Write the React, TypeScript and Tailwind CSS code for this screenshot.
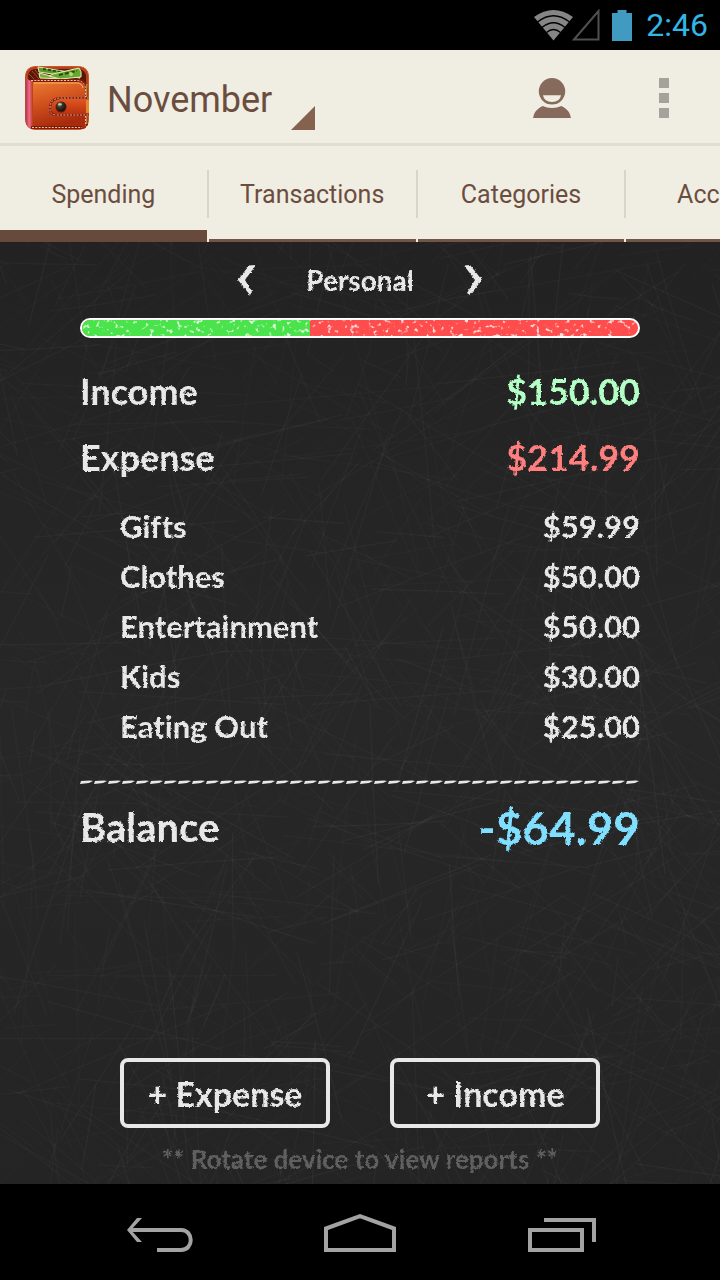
import { useState } from "react";

type Category = {
  name: string;
  amount: string;
};

const months = ["October", "November", "December"];
const tabs = ["Spending", "Transactions", "Categories", "Accounts"];

const categories: Category[] = [
  { name: "Gifts", amount: "$59.99" },
  { name: "Clothes", amount: "$50.00" },
  { name: "Entertainment", amount: "$50.00" },
  { name: "Kids", amount: "$30.00" },
  { name: "Eating Out", amount: "$25.00" },
];

const income = 150;
const expense = 214.99;

// Seeded so the board has the same scratches on every load
function makeScratches(count: number, size: number) {
  let seed = 7;
  const rand = () => {
    seed = (seed * 16807) % 2147483647;
    return seed / 2147483647;
  };
  return Array.from({ length: count }, () => {
    const x = rand() * size;
    const y = rand() * size;
    const angle = rand() * Math.PI * 2;
    const length = 30 + rand() * 200;
    const bend = (rand() - 0.5) * 5;
    const dx = Math.cos(angle) * length;
    const dy = Math.sin(angle) * length;
    return {
      d: `M${x.toFixed(1)} ${y.toFixed(1)}q${(dx / 2 + bend).toFixed(1)} ${(dy / 2 - bend).toFixed(1)} ${dx.toFixed(1)} ${dy.toFixed(1)}`,
      opacity: 0.01 + rand() * 0.025,
    };
  });
}

const scratches = makeScratches(1500, 1000);

function Chalkboard() {
  return (
    <svg className="absolute inset-0 w-full h-full" aria-hidden="true">
      <defs>
        <pattern id="scratches" width="1000" height="1000" patternUnits="userSpaceOnUse">
          {scratches.map((s, i) => (
            <path key={i} d={s.d} fill="none" stroke="#fff" strokeWidth="1" opacity={s.opacity} />
          ))}
        </pattern>
        <filter id="chalk" x="-2%" y="-10%" width="104%" height="120%">
          <feTurbulence type="fractalNoise" baseFrequency="0.4" numOctaves="2" seed="4" result="noise" />
          <feDisplacementMap in="SourceGraphic" in2="noise" scale="3" xChannelSelector="R" yChannelSelector="G" />
        </filter>
      </defs>
      <rect width="100%" height="100%" fill="url(#scratches)" />
    </svg>
  );
}

function WalletIcon() {
  return (
    <svg viewBox="0 0 64 64" className="w-16 h-16 shrink-0" aria-hidden="true">
      <defs>
        <linearGradient id="leather" x1="0" y1="0" x2="0.3" y2="1">
          <stop offset="0" stopColor="#f08a35" />
          <stop offset="0.45" stopColor="#d85b22" />
          <stop offset="1" stopColor="#a92a0c" />
        </linearGradient>
        <linearGradient id="spine" x1="0" y1="0" x2="1" y2="0">
          <stop offset="0" stopColor="#a8324a" />
          <stop offset="0.5" stopColor="#ee6d86" />
          <stop offset="1" stopColor="#b8391a" />
        </linearGradient>
        <linearGradient id="strap" x1="0" y1="0" x2="0" y2="1">
          <stop offset="0" stopColor="#e2561f" />
          <stop offset="1" stopColor="#b93210" />
        </linearGradient>
        <radialGradient id="snap" cx="0.35" cy="0.3" r="0.8">
          <stop offset="0" stopColor="#a3a38a" />
          <stop offset="0.35" stopColor="#3c382b" />
          <stop offset="1" stopColor="#0c0805" />
        </radialGradient>
        <clipPath id="wallet">
          <rect width="64" height="64" rx="9" />
        </clipPath>
      </defs>
      <g clipPath="url(#wallet)">
        <rect x="0.5" y="0.5" width="63" height="63" rx="9" fill="#b5411b" stroke="#d2552a" />
        <path d="M3 10Q4 3 11 3H54Q61 4 61 11V17H4Z" fill="#571607" />
        <path d="M4 8l6 6M7 5l8 9M10 4l8 10" stroke="#ae4a22" strokeWidth="1" />
        <path d="M13 1L44 6L55 12L14 6Z" fill="#5d9a2c" stroke="#dfe9b4" strokeWidth="1" />
        <path d="M18 3L36 6" stroke="#294f14" strokeWidth="2" strokeDasharray="3 2" />
        <path d="M14 7L38 13L15 12Z" fill="#77ad38" stroke="#e5edc3" strokeWidth="1" />
        <path d="M28 8L54 2Q57 5 56 11L35 13L24 10Z" fill="#67a82f" stroke="#e1ebba" strokeWidth="1" />
        <path d="M34 9L52 5" stroke="#24480f" strokeWidth="2" strokeDasharray="4 2" />
        <circle cx="46" cy="8" r="2" fill="#b7d571" />
        <path d="M1 10Q1 15 8 15H53Q61 15 61 22V63H9Q1 62 1 54Z" fill="url(#leather)" />
        <path d="M0.5 10Q2 15 8 15V63Q1 62 0.5 54Z" fill="url(#spine)" />
        <path d="M8 14.500H53Q61 15 61.500 23V60" fill="none" stroke="#7c1d0b" strokeWidth="3" />
        <path d="M6 14.500H52Q60 15 60.500 23V60" fill="none" stroke="#f5c3a0" strokeWidth="1" strokeDasharray="2 1.300" />
        <path d="M9 17H52Q57 17 58 22" fill="none" stroke="#ffad62" strokeWidth="1" />
        <path d="M6 61.500H57" stroke="#6d1708" strokeWidth="2.500" />
        <path d="M7 61.500H57" stroke="#f5c3a0" strokeWidth="1" strokeDasharray="2 1.300" />
        <path d="M61.800 18V31M61.800 50V58" stroke="#d6b545" strokeWidth="1" />
        <path d="M64 31H34Q24 32 24 42V45Q25 50 32 50H64Z" fill="#7c1d0b" />
        <path d="M64 33H35Q26 34 26 42V44Q27 48 33 48H64Z" fill="url(#strap)" />
        <path d="M64 32H34.500Q25 33 25 42V44.500Q26 49 32 49H64" fill="none" stroke="#f0ab98" strokeWidth="1" strokeDasharray="2 1.300" />
        <path d="M61 34H64V47H61Z" fill="#e58a28" />
        <circle cx="36" cy="41" r="5.500" fill="#64180a" />
        <circle cx="36" cy="40.500" r="4.800" fill="url(#snap)" />
        <ellipse cx="35" cy="38.300" rx="2" ry="1" fill="#d8d8c4" opacity="0.8" />
      </g>
    </svg>
  );
}

function StatusBar() {
  return (
    <div className="h-[50px] bg-black flex items-center justify-end pr-3">
      <svg viewBox="0 0 39 31" className="w-[39px] h-[31px]" aria-label="Wi-Fi">
        <path d="M19.500 30.500L0 7Q19.500 -7 39 7Z" fill="#858585" />
        <path d="M3.500 12Q19.500 -0.500 35.500 12M8 17.500Q19.500 8 31 17.500M12.500 22.500Q19.500 16.500 26.500 22.500" fill="none" stroke="#000" strokeWidth="1.400" />
      </svg>
      <svg viewBox="0 0 28 32" className="w-7 h-8 -ml-px" aria-label="No signal">
        <path d="M2 30.500H26.500V2Z" fill="none" stroke="#505050" strokeWidth="2" />
      </svg>
      <svg viewBox="0 0 20 31" className="w-5 h-[31px] ml-3" aria-label="Battery">
        <path d="M0 3H5.500V0H14.500V3H20V31H0Z" fill="#419bc1" />
      </svg>
      <span className="ml-3.5 text-[32px] leading-none text-[#33b5e5]">2:46</span>
    </div>
  );
}

function ActionBar() {
  const [month, setMonth] = useState("November");

  return (
    <header className="h-24 bg-[#f0ede2] border-b-[3px] border-[#e0ddd1] flex items-center pt-0.5 pl-[25px] pr-[31px]">
      <WalletIcon />
      <div className="relative ml-[18px] w-52">
        <select
          aria-label="Month"
          value={month}
          onChange={(e) => setMonth(e.target.value)}
          className="appearance-none block w-full h-16 pt-1 bg-transparent text-4xl text-[#6b4d3f] outline-none cursor-pointer"
        >
          {months.map((m) => (
            <option key={m}>{m}</option>
          ))}
        </select>
        <svg viewBox="0 0 24 24" className="absolute right-0 bottom-0 w-6 h-6 pointer-events-none" aria-hidden="true">
          <path d="M24 0V24H0Z" fill="#856250" />
        </svg>
      </div>
      <button aria-label="Profile" className="ml-auto p-3 cursor-pointer">
        <svg viewBox="0 0 38 40" className="w-[38px] h-10">
          <circle cx="19" cy="13.300" r="13.200" fill="#866b5d" />
          <path d="M10 17.300H28Q27 24 19 24Q11 24 10 17.300Z" fill="#f0ede2" />
          <path d="M0 40Q1 32 9.500 28Q14 30 19 30Q24 30 28.500 28Q37 32 38 40Z" fill="#866b5d" />
        </svg>
      </button>
      <button aria-label="More options" className="ml-14 p-5 cursor-pointer">
        <svg viewBox="0 0 10 40" className="w-2.5 h-10">
          <path d="M0 0H10V10H0ZM0 15H10V25H0ZM0 30H10V40H0Z" fill="#a4a29b" />
        </svg>
      </button>
    </header>
  );
}

function Tabs() {
  const [active, setActive] = useState("Spending");

  return (
    <nav className="h-24 bg-[#f0ede2] flex overflow-hidden">
      {tabs.map((tab) => (
        <div key={tab} className="basis-[29%] shrink-0 flex items-center">
          <button
            onClick={() => setActive(tab)}
            className={
              tab === active
                ? "flex-1 h-full pt-3.5 text-[25px] text-[#6b4d3f] border-b-12 border-[#674a3c] cursor-pointer"
                : "flex-1 h-full pt-[5px] text-[25px] text-[#6b4d3f] border-b-3 border-[#735547] cursor-pointer"
            }
          >
            {tab}
          </button>
          <span className="w-0.5 h-12 bg-[#d8d5ca]" />
        </div>
      ))}
    </nav>
  );
}

function ProgressBar() {
  const share = (income / (income + expense)) * 100;

  return (
    <div className="relative h-5 rounded-full border-2 border-white overflow-hidden flex bg-[#ff4d4d]">
      <div className="bg-[#4be34b]" style={{ width: `${share}%` }} />
      <svg className="absolute inset-0 w-full h-full" aria-hidden="true">
        <filter id="specks" x="0" y="0" width="100%" height="100%">
          <feTurbulence type="fractalNoise" baseFrequency="0.22" numOctaves="2" seed="11" />
          <feColorMatrix values="0 0 0 0 1  0 0 0 0 1  0 0 0 0 1  6 0 0 0 -3.6" />
        </filter>
        <rect width="100%" height="100%" filter="url(#specks)" opacity="0.8" />
      </svg>
    </div>
  );
}

function Summary() {
  return (
    <main className="relative flex-1 flex flex-col bg-linear-to-b from-[#222222] via-[#272727] to-[#242424] px-20 font-[Lato,sans-serif] font-bold [font-variant-ligatures:none] text-[#e8e8e8]">
      <Chalkboard />
      <div className="relative flex-1 flex flex-col">
        <div className="h-[76px] flex items-center justify-center gap-10 [filter:url(#chalk)]">
          <button aria-label="Previous account" className="p-2.5 cursor-pointer">
            <svg viewBox="0 0 18 30" className="w-[18px] h-[30px]">
              <path d="M11 0.500L18 0L7 15L14 27L12 30L0 15Z" fill="currentColor" />
            </svg>
          </button>
          <span className="text-[28px]">Personal</span>
          <button aria-label="Next account" className="p-2.5 cursor-pointer">
            <svg viewBox="0 0 18 30" className="w-[18px] h-[30px]">
              <path d="M0 0.500L6 0L18 15L6 30L3 28L11 15Z" fill="currentColor" />
            </svg>
          </button>
        </div>

        <ProgressBar />

        <div className="mt-5 [filter:url(#chalk)]">
          <div className="h-[66px] flex items-center justify-between text-4xl">
            <span>Income</span>
            <span className="text-[#b3ffc6]">$150.00</span>
          </div>
          <div className="h-[66px] flex items-center justify-between text-4xl">
            <span>Expense</span>
            <span className="text-[#ff7f7f]">$214.99</span>
          </div>

          <ul className="mt-[11px] pl-10">
            {categories.map((c) => (
              <li key={c.name} className="h-[50px] flex items-center justify-between text-[31px]">
                <span>{c.name}</span>
                <span>{c.amount}</span>
              </li>
            ))}
          </ul>
        </div>

        <svg className="mt-[29px] block w-full h-1" aria-hidden="true">
          <defs>
            <pattern id="dashes" width="14" height="4" patternUnits="userSpaceOnUse">
              <path d="M1 1L10 0.500L13 1L9 3L0 4Z" fill="#e8e8e8" />
            </pattern>
          </defs>
          <rect width="100%" height="4" fill="url(#dashes)" />
        </svg>

        <div className="h-[86px] flex items-center justify-between [filter:url(#chalk)]">
          <span className="text-[40px]">Balance</span>
          <span className="text-[46px] text-[#80dfff]">-$64.99</span>
        </div>

        <div className="mt-auto px-10 flex gap-[60px]">
          <button className="flex-1 h-[70px] border-4 border-[#e8e8e8] rounded-lg cursor-pointer">
            <span className="block text-[34px] [filter:url(#chalk)]">+ Expense</span>
          </button>
          <button className="flex-1 h-[70px] border-4 border-[#e8e8e8] rounded-lg cursor-pointer">
            <span className="block text-[34px] [filter:url(#chalk)]">+ Income</span>
          </button>
        </div>
        <p className="h-14 pt-1.5 flex items-center justify-center text-[26px] text-[#606060] [filter:url(#chalk)]">
          ** Rotate device to view reports **
        </p>
      </div>
    </main>
  );
}

function NavigationBar() {
  return (
    <footer className="h-24 bg-black px-[60px] flex text-[#a3a3a3]">
      <button aria-label="Back" className="flex-1 flex items-center justify-center cursor-pointer">
        <svg viewBox="0 0 68 40" className="w-[68px] h-10" fill="none" stroke="currentColor">
          <path d="M3 18H55C68 18 68 38 55 38H31" strokeWidth="4" />
          <path d="M11 6H16L5 18L16 30H11L1 18Z" fill="currentColor" stroke="none" />
        </svg>
      </button>
      <button aria-label="Home" className="flex-1 flex items-center justify-center cursor-pointer">
        <svg viewBox="0 0 72 40" className="w-[72px] h-10" fill="none" stroke="currentColor" strokeWidth="4">
          <path d="M2 38V16.500L36 4.200L70 16.500V38Z" />
        </svg>
      </button>
      <button aria-label="Recent apps" className="flex-1 flex items-center justify-center cursor-pointer">
        <svg viewBox="0 0 72 40" className="w-[72px] h-10" fill="none" stroke="currentColor" strokeWidth="4">
          <path d="M6 18H58V38H6ZM20 8H70V30" />
        </svg>
      </button>
    </footer>
  );
}

export default function App() {
  return (
    <div className="min-h-screen flex flex-col font-[Roboto,sans-serif]">
      <StatusBar />
      <ActionBar />
      <Tabs />
      <Summary />
      <NavigationBar />
    </div>
  );
}
